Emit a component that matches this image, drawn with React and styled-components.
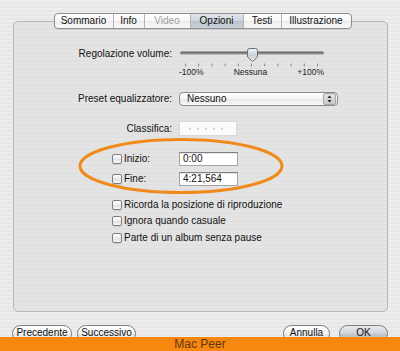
import React from 'react';
import styled, { createGlobalStyle } from 'styled-components';

const GlobalStyle = createGlobalStyle`
	html, body {
		margin: 0;
		padding: 0;
		background: #ebebeb;
	}
	body {
		font-family: "Liberation Sans", Arial, sans-serif;
		font-size: 10px;
		color: #111;
	}
`;

const Page = styled.div`
	width: 400px;
	height: 351px;
	display: flex;
	flex-direction: column;
	overflow: hidden;
`;

const Window = styled.div`
	height: 337px;
	overflow: hidden;
	padding-top: 13px;
	box-sizing: border-box;
	background: repeating-linear-gradient(to bottom, #ededed 0, #ededed 2px, #e7e7e7 2px, #e7e7e7 4px);
`;

const TabBar = styled.div`
	position: relative;
	z-index: 1;
	display: flex;
	justify-content: center;
	padding-left: 5px;
`;

const TabGroup = styled.div`
	display: flex;
	height: 16px;
	box-sizing: border-box;
	border: 1px solid #8e8e8e;
	border-radius: 4px;
	overflow: hidden;
	background: linear-gradient(to bottom, #ffffff 0%, #f7f7f7 50%, #ececec 51%, #fafafa 100%);
	box-shadow: 0 1px 0 rgba(0, 0, 0, 0.08);
`;

const Tab = styled.div`
	width: ${p => p.$w}px;
	display: flex;
	align-items: center;
	justify-content: center;
	font-size: 10px;
	line-height: 14px;
	color: ${p => (p.$disabled ? '#a0a0a0' : '#111')};
	border-left: ${p => (p.$first ? 'none' : '1px solid #b4b4b4')};
	background: ${p =>
		p.$active
			? 'linear-gradient(to bottom, #e2e7ec 0%, #cdd5dd 50%, #b9c3cd 51%, #c9d2db 100%)'
			: 'transparent'};
`;

const Panel = styled.div`
	position: relative;
	margin: -8px 12px 0 13px;
	height: 291px;
	box-sizing: border-box;
	border: 1px solid #b6b6b6;
	border-radius: 5px;
	background: repeating-linear-gradient(to bottom, #e4e4e4 0, #e4e4e4 2px, #e1e1e1 2px, #e1e1e1 4px);
	padding-top: 25px;
`;

const FieldRow = styled.div`
	display: flex;
	align-items: ${p => (p.$top ? 'flex-start' : 'center')};
	gap: 7px;
	margin-top: ${p => p.$mt || 0}px;
`;

const Label = styled.div`
	width: 158px;
	text-align: right;
	line-height: 14px;
	white-space: nowrap;
`;

const SliderBox = styled.div`
	width: 146px;
	display: flex;
	flex-direction: column;
`;

const SliderScale = styled.div`
	display: flex;
	justify-content: space-between;
	font-size: 8.5px;
	line-height: 9px;
	color: #222;
	padding-right: 1px;
`;

const Popup = styled.div`
	width: 159px;
	height: 14px;
	box-sizing: border-box;
	border: 1px solid #8c8c8c;
	border-radius: 4px;
	background: linear-gradient(to bottom, #ffffff 0%, #f6f6f6 50%, #e9e9e9 51%, #f9f9f9 100%);
	display: flex;
	align-items: center;
	justify-content: space-between;
	padding: 0 1px 0 7px;
	line-height: 12px;
`;

const Stepper = styled.div`
	width: 11px;
	height: 10px;
	border-radius: 2px;
	background: linear-gradient(to bottom, #e4e4e4, #c9c9c9);
	border: 1px solid #a6a6a6;
	display: flex;
	align-items: center;
	justify-content: center;
`;

const RatingBox = styled.div`
	width: 58px;
	height: 15px;
	box-sizing: border-box;
	background: #fbfbfb;
	border: 1px solid #d8d8d8;
	display: flex;
	align-items: center;
	gap: 6px;
	padding-left: 9px;
`;

const Dot = styled.span`
	width: 2px;
	height: 2px;
	border-radius: 1px;
	background: #c4c4c4;
`;

const CheckRow = styled.label`
	display: flex;
	align-items: center;
	gap: 2px;
	height: ${p => p.$h || 16}px;
	padding-left: 98px;
	margin-top: ${p => p.$mt || 0}px;
	line-height: 14px;
`;

const Box = styled.span`
	width: 10px;
	height: 10px;
	box-sizing: border-box;
	border: 1px solid #7f7f7f;
	border-radius: 2px;
	background: linear-gradient(to bottom, #fdfdfd 0%, #ededed 50%, #e0e0e0 51%, #f6f6f6 100%);
	box-shadow: 0 1px 0 rgba(0, 0, 0, 0.08);
	flex: none;
`;

const CheckLabel = styled.span`
	width: ${p => (p.$w ? `${p.$w}px` : 'auto')};
	white-space: nowrap;
`;

const TextField = styled.div`
	width: 59px;
	height: 14px;
	box-sizing: border-box;
	background: #fff;
	border: 1px solid #a3a3a3;
	border-top-color: #7e7e7e;
	box-shadow: inset 0 1px 0 rgba(0, 0, 0, 0.1);
	padding-left: 3px;
	line-height: 12px;
	font-size: 10px;
`;

const Highlight = styled.svg`
	position: absolute;
	left: 64px;
	top: 116px;
	pointer-events: none;
`;

const ButtonRow = styled.div`
	display: flex;
	align-items: flex-start;
	margin-top: 13px;
	padding: 0 12px 0 12px;
	gap: 5px;
`;

const Spacer = styled.div`
	flex: 1;
`;

const PushButton = styled.div`
	width: ${p => p.$w}px;
	height: 17px;
	box-sizing: border-box;
	margin-left: ${p => p.$ml || 0}px;
	border: 1px solid #7a7a7a;
	border-radius: 9px;
	display: flex;
	align-items: center;
	justify-content: center;
	font-size: 10px;
	line-height: 13px;
	padding-bottom: 2px;
	background: ${p =>
		p.$default
			? 'linear-gradient(to bottom, #e9ecef 0%, #cfd4d9 50%, #b9bfc5 51%, #d3d8dc 100%)'
			: 'linear-gradient(to bottom, #ffffff 0%, #f3f3f3 50%, #e3e3e3 51%, #f8f8f8 100%)'};
`;

const Footer = styled.div`
	height: 14px;
	background: #f7870f;
	color: #5b3816;
	font-family: "Liberation Sans", Arial, sans-serif;
	font-size: 12px;
	line-height: 14px;
	text-align: center;
`;

const tabs = [
	{ name: 'Sommario', w: 58 },
	{ name: 'Info', w: 30 },
	{ name: 'Video', w: 45, disabled: true },
	{ name: 'Opzioni', w: 52, active: true },
	{ name: 'Testi', w: 37 },
	{ name: 'Illustrazione', w: 69 },
];

function VolumeSlider() {
	const ticks = Array.from({ length: 11 }, (_, i) => 6.5 + i * 13.2);
	return (
		<SliderBox>
			<svg width="146" height="21" viewBox="0 0 146 21">
				<defs>
					<linearGradient id="track" x1="0" y1="0" x2="0" y2="1">
						<stop offset="0" stopColor="#5e5e5e" />
						<stop offset="1" stopColor="#9a9a9a" />
					</linearGradient>
					<linearGradient id="thumb" x1="0" y1="0" x2="0" y2="1">
						<stop offset="0" stopColor="#f4f6f8" />
						<stop offset="0.5" stopColor="#c9d1d9" />
						<stop offset="1" stopColor="#e8ecf0" />
					</linearGradient>
				</defs>
				<rect x="1" y="4.5" width="144" height="3" rx="1.5" fill="url(#track)" />
				{ticks.map(x => (
					<line key={x} x1={x} y1="16.5" x2={x} y2="19.5" stroke="#8a8a8a" strokeWidth="1" />
				))}
				<path
					d="M68.5 3.5 Q68.5 1.5 70.5 1.5 L76.5 1.5 Q78.5 1.5 78.5 3.5 L78.5 10 L73.5 14.5 L68.5 10 Z"
					fill="url(#thumb)"
					stroke="#6f6f6f"
					strokeWidth="1"
				/>
			</svg>
			<SliderScale>
				<span>-100%</span>
				<span>Nessuna</span>
				<span>+100%</span>
			</SliderScale>
		</SliderBox>
	);
}

export default function App() {
	return (
		<>
			<GlobalStyle />
			<Page>
				<Window>
					<TabBar>
						<TabGroup>
							{tabs.map((t, i) => (
								<Tab key={t.name} $w={t.w} $first={i === 0} $active={t.active} $disabled={t.disabled}>
									{t.name}
								</Tab>
							))}
						</TabGroup>
					</TabBar>
					<Panel>
						<FieldRow $top>
							<Label>Regolazione volume:</Label>
							<VolumeSlider />
						</FieldRow>
						<FieldRow $mt={15}>
							<Label>Preset equalizzatore:</Label>
							<Popup>
								<span>Nessuno</span>
								<Stepper>
									<svg width="5" height="8" viewBox="0 0 5 8">
										<path d="M2.5 0.5 L4.5 3 L0.5 3 Z M2.5 7.5 L4.5 5 L0.5 5 Z" fill="#222" />
									</svg>
								</Stepper>
							</Popup>
						</FieldRow>
						<FieldRow $mt={15}>
							<Label>Classifica:</Label>
							<RatingBox>
								<Dot />
								<Dot />
								<Dot />
								<Dot />
								<Dot />
							</RatingBox>
						</FieldRow>
						<CheckRow $mt={16} $h={14}>
							<Box />
							<CheckLabel $w={53}>Inizio:</CheckLabel>
							<TextField>0:00</TextField>
						</CheckRow>
						<CheckRow $mt={6} $h={14}>
							<Box />
							<CheckLabel $w={53}>Fine:</CheckLabel>
							<TextField>4:21,564</TextField>
						</CheckRow>
						<CheckRow $mt={11}>
							<Box />
							<CheckLabel>Ricorda la posizione di riproduzione</CheckLabel>
						</CheckRow>
						<CheckRow>
							<Box />
							<CheckLabel>Ignora quando casuale</CheckLabel>
						</CheckRow>
						<CheckRow $mt={1}>
							<Box />
							<CheckLabel>Parte di un album senza pause</CheckLabel>
						</CheckRow>
						<Highlight width="206" height="56" viewBox="0 0 206 56">
							<ellipse cx="103" cy="28" rx="101" ry="26.5" fill="none" stroke="#f08a1c" strokeWidth="3" />
						</Highlight>
					</Panel>
					<ButtonRow>
						<PushButton $w={60}>Precedente</PushButton>
						<PushButton $w={59}>Successivo</PushButton>
						<Spacer />
						<PushButton $w={47}>Annulla</PushButton>
						<PushButton $w={49} $ml={4} $default>OK</PushButton>
					</ButtonRow>
				</Window>
				<Footer>Mac Peer</Footer>
			</Page>
		</>
	);
}
